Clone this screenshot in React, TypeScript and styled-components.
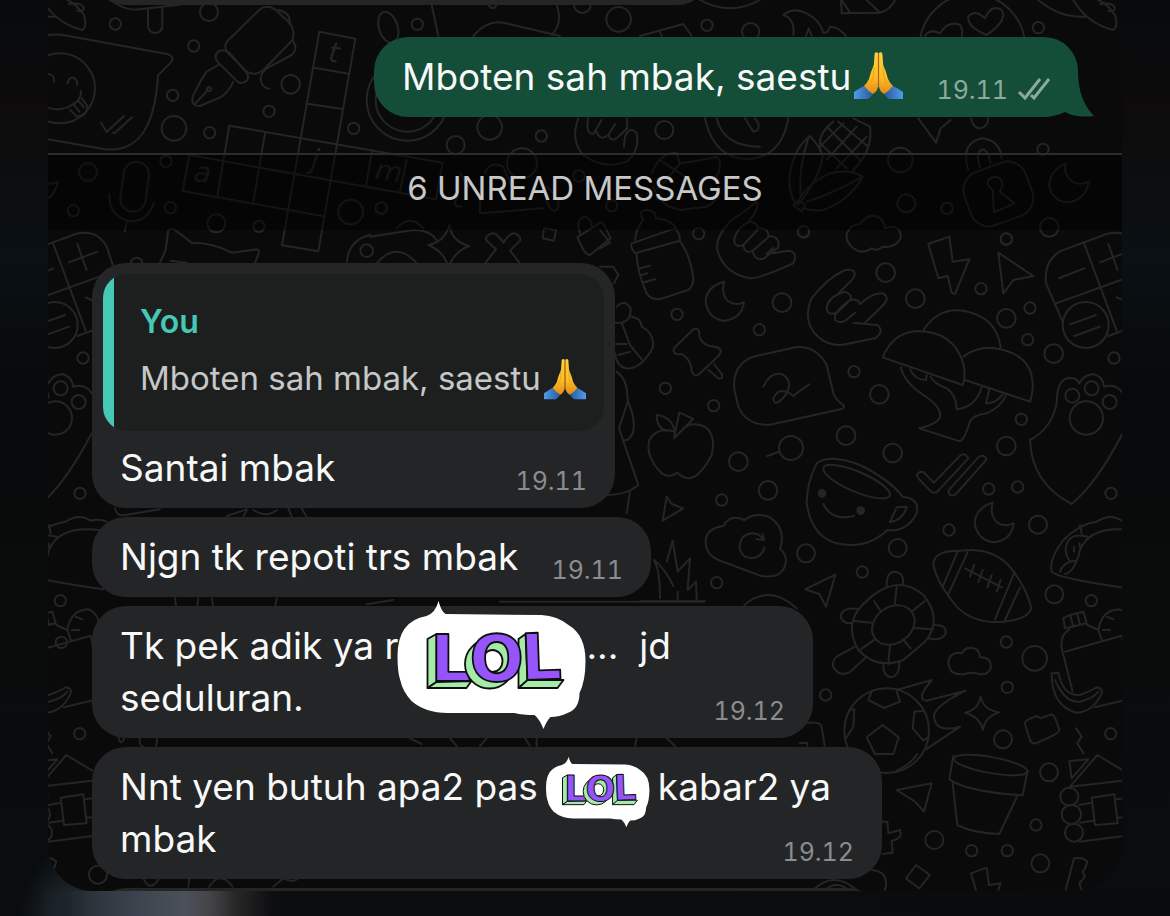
import React from "react";
import styled, { createGlobalStyle } from "styled-components";

const GlobalStyle = createGlobalStyle`
  * { box-sizing: border-box; }
  body {
    margin: 0;
    min-height: 100vh;
    background:
      linear-gradient(90deg, rgba(30, 38, 46, 0) 40px, #1b2228 64px, #2b333b 90px, #3b444e 135px, #4b505a 185px, #464548 208px, #262526 238px, #0c0d0f 275px, #090b0d 100%) left bottom / 100% 25px no-repeat,
      radial-gradient(ellipse 60px 70px at 80px 100%, #222a31 20%, rgba(34, 42, 49, 0) 100%),
      linear-gradient(180deg, #070a0d 0%, #0d0b0b 12%, #0a1014 28%, #07090b 45%, #0a0c0b 65%, #090d10 100%);
    font-family: Inter, "Liberation Sans", sans-serif;
  }
`;

const Page = styled.div`
  padding: 0 48px 25px;
`;

const Chat = styled.main`
  position: relative;
  isolation: isolate;
  overflow: hidden;
  border-radius: 0 0 45px 45px;
  background: #0a0a0a;
`;

const WallpaperSvg = styled.svg`
  position: absolute;
  inset: 0;
  z-index: -1;
  width: 100%;
  height: 100%;
  fill: none;
  stroke: #252525;
  stroke-width: 6;
  stroke-linecap: round;
  stroke-linejoin: round;

  text {
    fill: #252525;
    stroke: none;
    font-family: "DejaVu Sans", sans-serif;
    font-style: italic;
    font-weight: 200;
    font-size: 84px;
  }
`;

const Messages = styled.section`
  display: flex;
  flex-direction: column;
  align-items: flex-start;
  gap: 9px;
  padding: 0 44px;
`;

const Bubble = styled.article<{ $width: number; $sent?: boolean }>`
  position: relative;
  display: grid;
  width: ${(p) => p.$width}px;
  max-width: 100%;
  align-self: ${(p) => (p.$sent ? "flex-end" : "flex-start")};
  padding: 14px 28px;
  border-radius: 34px;
  background: ${(p) => (p.$sent ? "#144d38" : "#242527")};
  color: #f7f8f8;
`;

const QuoteBubble = styled(Bubble)`
  padding: 11px 11px 14px;
`;

const ClippedAbove = styled(Bubble)`
  height: 80px;
  margin-top: -75px;
`;

const ClippedBelow = styled(Bubble)`
  height: 80px;
  margin-bottom: -77px;
`;

const SentGroup = styled(Messages)`
  gap: 32px;
  padding-bottom: 36px;
`;

const ReceivedGroup = styled(Messages)`
  padding-top: 33px;
`;

const Body = styled.div`
  grid-area: 1 / 1;
  display: grid;
`;

const QuotedBody = styled(Body)`
  grid-area: auto;
  padding: 0 17px;
`;

const Text = styled.p`
  grid-area: 1 / 1;
  margin: 0;
  font-size: 37px;
  line-height: 52px;
  white-space: pre-wrap;
`;

const Meta = styled.footer`
  grid-area: 1 / 1;
  align-self: end;
  justify-self: end;
  display: flex;
  align-items: center;
  gap: 9px;
  margin-bottom: -4px;
`;

const Time = styled.time<{ $sent?: boolean }>`
  font-size: 25px;
  font-variant-numeric: tabular-nums;
  line-height: 34px;
  color: ${(p) => (p.$sent ? "#8aab9d" : "#8b8c8e")};
`;

const Quote = styled.blockquote`
  margin: 0 0 11px;
  padding: 20px 16px 25px 37px;
  border-radius: 24px;
  background: linear-gradient(90deg, #46c8b7 11px, #1d1f1e 11px);
`;

const QuoteAuthor = styled.cite`
  display: block;
  font-size: 32px;
  font-style: normal;
  font-weight: 600;
  line-height: 56px;
  color: #46c8b7;
`;

const QuoteText = styled.p`
  margin: 0;
  font-size: 33px;
  line-height: 56px;
  color: #c6c7c7;
  white-space: nowrap;
`;

const UnreadBar = styled.h2`
  margin: 0;
  border-top: 2px solid #2c2c2c;
  background: rgba(0, 0, 0, 0.45);
  color: #c8c8c8;
  font-size: 33px;
  font-weight: 400;
  line-height: 66px;
  padding-bottom: 9px;
  text-align: center;
`;

const Tail = styled.svg`
  position: absolute;
  right: -16px;
  bottom: 0;
  width: 66px;
  height: 50px;
  fill: #144d38;
`;

const EmojiSvg = styled.svg<{ $size: number }>`
  width: ${(p) => p.$size}px;
  height: ${(p) => p.$size}px;
  margin-left: 3px;
  vertical-align: -10px;
`;

const StickerSlot = styled.span<{ $width: number }>`
  position: relative;
  display: inline-block;
  width: ${(p) => p.$width}px;
  height: 36px;
`;

const StickerSvg = styled.svg<{ $width: number; $drop: number }>`
  position: absolute;
  top: ${(p) => p.$drop}px;
  left: 50%;
  width: ${(p) => p.$width}px;
  transform: translate(-50%, -50%);
  overflow: visible;
`;

function PrayingHands({ size }: { size: number }) {
  return (
    <EmojiSvg $size={size} viewBox="0 0 49 49" role="img" aria-label="Folded hands">
      <defs>
        <linearGradient id="hand" x1="0" y1="0" x2="0" y2="1">
          <stop offset="0" stopColor="#ffcf3f" />
          <stop offset="0.6" stopColor="#fdbd23" />
          <stop offset="1" stopColor="#e0891c" />
        </linearGradient>
        <linearGradient id="cuff" x1="0" y1="0" x2="1" y2="0">
          <stop offset="0" stopColor="#4f9be8" />
          <stop offset="1" stopColor="#27599c" />
        </linearGradient>
        <g id="half">
          <path d="M0 41 Q6 37 10 35 L19 43 Q17 46 14 48 L0 48 Z" fill="url(#cuff)" />
          <path
            d="M24.300 2 Q20.800 0 20.600 3 L19.800 14 Q17 20 15 28 Q13 32 10 35 Q14 40 19 43 Q24.300 40 24.300 33 Z"
            fill="url(#hand)"
          />
          <path d="M20 16 Q20.500 24 17 32" fill="none" stroke="#e39a1a" strokeWidth="0.800" />
        </g>
      </defs>
      <use href="#half" />
      <use href="#half" transform="translate(49 0) scale(-1 1)" />
      <path d="M24.500 2 V36" stroke="#a8651a" strokeWidth="1.200" />
    </EmojiSvg>
  );
}

function LolSticker({ width, drop }: { width: number; drop: number }) {
  return (
    <StickerSvg $width={width} $drop={drop} viewBox="0 0 189 128">
      <path
        fill="#fff"
        d="M29 15 Q38 12 41 0 Q44 11 48 13 L144 14 Q160 15 171 24 Q188 34 188 60 Q188 80 182 92 Q182 108 170 112 Q162 116 153 116 Q149 120 146 128 Q142 118 137 114 Q125 114 117 112 L50 112 Q28 112 14 100 Q5 90 3 80 Q0 72 0 55 Q0 20 29 15 Z"
      />
      <g stroke="#0e0e0e" strokeLinejoin="round" fontFamily="DejaVu Sans, sans-serif" fontWeight="700" fontSize="64">
        {/* green sides of the two outer blocks */}
        <g fill="#a3eba6" strokeWidth="1.800">
          <path d="M30 38 L39 33 L39 81 L30 87 Z" />
          <path d="M30 87 L39 81 L74 80 L69 87 Z" />
          <path d="M121 38 L128 33 L130 80 L121 87 Z" />
          <path d="M121 87 L130 79 L166 79 L160 87 Z" />
        </g>
        <g fill="#9655fb" strokeWidth="1.800">
          <text x="33" y="80">L</text>
          <text x="124" y="79" transform="rotate(-2 124 79)">L</text>
        </g>
        {/* ring: green back, white opening, purple front */}
        <circle cx="92" cy="63" r="24.500" fill="#a3eba6" strokeWidth="1.800" />
        <circle cx="99" cy="56" r="20" fill="#a3eba6" stroke="none" />
        <ellipse cx="95" cy="60" rx="10" ry="11" fill="#fff" strokeWidth="1.800" />
        <text x="72" y="80" fill="#9655fb" strokeWidth="1.800">O</text>
      </g>
    </StickerSvg>
  );
}

function Ticks() {
  return (
    <svg width="33" height="26" viewBox="0 0 33 26" fill="none" stroke="#8aab9d" strokeWidth="3" aria-label="Delivered" role="img">
      <path d="M2 15 L8 21 L23 2 M14 18 L17 21 L32 2" />
    </svg>
  );
}

type Patch = { x: number; y: number; paths: string[]; dots: number[][] };

const patches: Patch[] = [
  {
    x: 0,
    y: 0,
    paths: [
      // smiling speech bubble
      "M87,130 Q110,100 185,104 L505,163 Q525,170 512,188 L474,226 C470,300 455,350 440,380 C415,430 370,455 310,447 L110,412 Q50,390 37,355",
      "M203,250 Q205,232 220,233 Q232,236 232,254 M140,222 Q165,222 162,245 M125,315 Q180,345 230,305 Q245,290 243,272",
      "M210,330 L232,350 Q262,348 262,318 L245,295 M222,315 L238,335 M236,303 L252,322 M303,368 L320,396 L372,348 M338,398 L345,398 L396,352",
      "M444,24 L444,80 Q447,98 466,99 Q486,97 487,78 L487,24 M330,0 Q380,35 420,28 L540,14",
      // fountain pen
      "M680,125 L780,28 Q800,12 825,28 L870,70 Q885,90 878,120 L790,210 Q765,230 740,215 L685,160 Q670,145 680,125Z",
      "M835,30 Q875,40 868,72 M880,125 Q895,145 875,165 L800,205 Q775,225 785,250 Q792,265 808,266",
      "M655,155 Q640,165 652,185 L712,245 Q728,255 742,240 Q748,228 738,216 L690,160 Q670,145 655,155",
      "M655,195 L620,215 Q605,235 578,290 Q572,320 600,318 L665,290 Q690,270 700,245 M585,312 L622,272",
      // crossword
      "M958,95 L1066,116 L955,754 L846,736Z M942,203 L1046,221 M922,311 L1027,327 M688,377 L1328,488 L1308,598 L568,465 L548,573 L966,648",
      "M688,377 L652,588 M795,400 L760,604 M1116,456 L1098,556 M1220,480 L1200,572",
      // microphone
      "M328,583 Q325,645 385,663 Q440,670 462,608 M380,665 L374,695",
      // cat
      "M480,788 L497,750 L505,690 Q512,682 525,690 L575,728 Q640,728 695,758 L770,748 Q780,750 776,760 L765,788 M512,782 L560,788",
      "M1040,790 Q1045,720 1110,705",
      // strips between the messages
      "M345,1525 Q350,1550 375,1545 L480,1528 M680,1548 L740,1528 M730,1548 L740,1532 M760,1530 Q800,1555 830,1530 M865,1525 L875,1550 M905,1525 L920,1550",
      "M525,1795 L528,1818 M595,1795 L592,1818 M635,1795 L640,1818 M830,1795 L826,1818 M1100,1813 L1180,1800",
      "M355,2210 Q362,2245 375,2210 M420,2212 Q415,2238 430,2240 M470,2212 Q472,2230 468,2240 M1230,2215 L1265,2232 M1350,2215 L1370,2238 M1460,2215 L1440,2238",
      "M1575,2215 L1590,2238 M1610,2215 L1610,2238 M1910,2215 L1905,2238 M2000,2215 L2025,2238",
      "M430,2635 Q450,2680 478,2635 M568,2635 L565,2660 M628,2660 Q660,2610 698,2660 M820,2660 L850,2635 Q880,2650 895,2635",
      "M1500,1805 L2110,1805",
    ],
    dots: [[346,72,17],[627,36,27],[581,138,17],[518,286,17],[522,385,37],[629,398,17],[872,253,28],[807,334,17],[1061,385,17],[264,516,27],[498,484,17],[220,632,17],[511,623,17],[649,670,27],[777,679,17],[1052,636,37],[1143,624,17],[180,265,105],[1100,752,19],[410,790,17],[627,268,6],[294,2624,27],[184,1927,17]],
  },
  {
    x: 370,
    y: 0,
    paths: [
      "M238,675 Q245,725 298,738 Q250,755 235,805 Q225,755 175,735 Q225,725 238,675",
      "M365,700 Q380,697 400,728 Q420,697 435,700 Q455,710 450,722 L420,752 L450,790 M365,700 Q342,710 350,722 L378,748 L345,790",
      "M522,685 L558,690 L552,722 L518,715Z M622,712 L690,668 Q700,665 705,680 L722,715 L660,765 Q650,765 640,750Z M630,700 Q615,655 645,650 Q665,655 665,680",
      "M0,710 L130,690 Q180,690 200,720 M80,685 Q120,640 160,685 M20,790 Q80,720 140,790",
      "M185,15 L205,108 M355,14 Q370,35 380,14 M310,108 Q350,60 400,68 L570,108 M560,14 Q580,70 545,105 M810,108 L940,72 L965,108 M870,95 L875,108 M990,0 Q1080,50 1170,0",
      "M625,355 Q600,420 640,465 Q700,510 770,485 Q810,450 800,400 Q780,375 765,410 L762,440 M655,355 Q645,400 670,402 L695,360 M680,395 Q690,425 715,405 L735,372 M715,405 Q725,430 745,410 L772,385 L770,355",
      "M345,520 Q360,480 400,500 L425,560 M270,520 L295,560 M265,590 Q240,620 275,620 M330,580 L330,640 L520,625 M530,560 Q580,600 560,630 Q540,640 530,600",
      "M845,520 Q870,455 920,460 L930,490 L880,550 M930,490 Q1000,480 1040,470 Q1060,490 1040,530 M870,480 L960,540 M850,560 Q870,620 930,630 L1010,620 Q1050,600 1045,560",
      // clock
      "M1005,355 Q1030,475 1135,478 Q1235,470 1255,355 M1040,355 Q1060,440 1170,440 M1125,355 L1150,395 Q1170,395 1165,370 L1155,355",
    ],
    dots: [[637,14,25],[746,58,37],[1011,76,17],[1142,95,26],[142,73,17],[359,382,37],[514,408,17],[257,435,27],[883,390,27],[456,490,45],[627,528,17],[725,617,17],[34,624,17],[112,300,122],[112,300,95]],
  },
  {
    x: 770,
    y: 0,
    paths: [
      "M888,490 Q838,510 838,560 Q850,605 895,607 Q945,600 957,545 Q925,560 900,540 Q878,515 888,490",
      "M40,45 Q70,20 110,40 Q150,60 160,98 Q175,100 180,80 Q205,80 228,108 M40,45 Q75,55 70,105 M108,108 L116,85 L125,108",
      "M213,0 L215,40 L330,38 Q360,30 375,0 M215,0 L240,38 M290,0 L330,38",
      "M650,105 Q590,80 595,50 Q615,25 645,55 Q665,10 695,30 Q715,60 650,105 M465,108 Q480,85 510,100 Q535,60 570,75 Q580,90 575,108",
      "M805,0 Q870,55 950,50 M910,0 Q950,70 1030,90 Q1045,80 1035,45 Q1010,10 985,0 M990,12 Q1030,5 1035,25 Q1030,38 1015,32",
      // corn
      "M120,408 Q65,450 58,540 Q60,600 85,615 Q150,530 158,470 Q150,440 120,408 M115,415 Q85,500 92,590 M85,605 Q110,550 180,520 Q240,505 278,530 Q240,600 160,630 Q120,635 100,622 M70,615 L85,600 L105,615 L95,635Z M110,605 Q190,580 278,530",
      "M158,470 Q130,410 190,365 M300,380 Q310,450 250,510 M175,385 L270,480 M205,365 L295,440 M150,430 L230,505 M150,440 L220,370 M170,480 L260,380 M200,505 L290,410 M250,355 L300,380",
      "M445,355 L498,428 L512,385 L542,360 M603,355 Q610,385 630,385 Q655,380 655,355",
      // padlock
      "M595,510 Q570,430 635,415 Q690,420 695,475 M630,502 Q615,455 637,448 Q655,450 662,490 M668,570 Q640,550 665,532 Q695,525 698,555 L690,575 L733,610 L672,637Z",
      "M250,745 Q215,715 240,685 Q255,672 272,672 Q290,640 325,650 Q345,665 345,685 Q395,670 392,715 Q375,745 340,740 Q320,755 305,745 Q275,765 250,745",
    ],
    dots: [[607,140,158],[805,83,17],[391,480,37],[409,610,27],[531,625,17],[819,448,17],[838,682,28],[100,695,17],[709,717,17]],
  },
  {
    x: 600,
    y: 220,
    paths: [
      // baby bottle
      "M95,70 Q90,80 105,100 L240,62 Q240,40 225,25Z M110,102 Q110,150 140,220 Q155,242 185,236 L265,210 Q285,195 278,160 Q265,95 240,65 M120,145 L150,137 M125,165 L142,160 M132,187 L165,178 M105,60 Q110,20 130,0 Q110,-30 145,-30 Q170,-25 168,-5 Q215,0 228,25",
      // hands
      "M470,-55 Q440,-30 395,0 Q345,50 352,90 Q370,160 450,175 Q480,175 580,130 Q595,95 565,92 L518,100 M470,-55 Q480,-35 445,5",
      "M402,60 Q410,20 450,5 Q480,10 472,30 L430,75 Q405,85 402,60 M430,75 Q435,105 458,92 L505,52 Q508,22 472,25 M458,92 Q465,125 492,115 L535,82 Q542,50 505,47 M500,102 L520,84",
      "M735,150 Q680,175 635,235 Q610,290 640,335 Q680,385 740,372 L825,355 Q855,335 832,315 L760,308 M735,150 Q775,145 760,175 L715,220 M780,252 Q820,215 850,220 Q870,235 850,255 L795,308",
      "M680,270 Q680,230 735,215 Q760,225 750,240 L715,275 Q690,290 680,270 M705,300 Q700,275 750,240 Q775,235 780,252 M705,300 Q725,315 745,295 L765,278",
      "M373,185 Q318,200 317,245 Q325,300 375,302 Q425,295 432,247 Q405,260 380,240 Q362,215 373,185",
      "M222,385 L280,328 Q300,320 298,350 Q310,380 345,380 Q370,385 358,405 L300,460 Q285,475 275,455 Q275,420 245,402 Q215,405 222,385Z M325,450 L355,475 Q370,478 366,463 L342,432",
      "M460,410 L590,381 Q650,378 680,435 L700,520 Q708,540 730,555 Q735,565 722,568 L510,614 Q440,618 415,560 L403,510 Q395,435 460,410Z M490,500 Q510,455 545,462 Q580,480 560,520 Q540,550 525,548 Q512,535 535,515 Q560,510 580,528 Q600,510 628,493",
      // apple
      "M225,635 Q170,620 148,660 Q135,710 185,760 Q210,775 232,758 Q250,775 270,775 Q300,770 335,705 Q350,640 310,618 Q275,605 250,625 M222,655 L238,577 L280,597Z M225,635 Q215,590 170,585 Q170,625 200,632",
      "M538,695 L502,708 M200,830 L215,852 L250,865 L188,902Z",
      "M50,455 Q85,480 82,540 Q110,600 98,640 Q85,665 75,660 M85,540 L57,625 L115,795 Q80,825 20,825 M90,815 L80,880",
      "M50,260 Q75,235 92,265 Q95,300 65,308 L45,308 M65,308 L90,375 L125,418 M95,290 Q125,295 125,320 Q165,340 158,385 Q120,450 80,445 Q50,440 45,400 M48,372 L80,372 M55,405 L90,395 M0,140 L40,140 L55,165 L42,190 M0,30 L30,68 L0,85",
    ],
    dots: [[296,41,17],[611,36,17],[546,248,28],[231,283,17],[478,329,17],[196,505,17],[341,557,17],[762,455,17],[838,523,28],[738,647,28],[415,725,28],[504,811,28],[365,840,17],[857,158,28],[573,684,36]],
  },
  {
    x: 880,
    y: 220,
    paths: [
      "M145,72 L208,50 L218,125 L268,118 L225,222 L215,218 L203,168 L175,175Z M355,98 L460,168 L400,180 L370,220Z",
      // calculator
      "M548,305 L498,190 Q490,120 545,92 L680,42 Q743,25 773,80 L800,160 M685,348 L740,328 M613,72 L710,332 M528,250 L793,155 M538,174 L613,145 M660,127 L745,95 M685,72 L713,150 M710,232 L728,240 M570,313 L648,285 M583,348 L660,320",
      // tree
      "M132,328 Q175,262 250,272 Q350,290 362,382 M8,412 Q40,335 115,333 Q220,335 250,430 Q258,470 248,495Z M250,410 Q290,380 340,384 Q460,400 458,500 Q456,530 450,545 L255,480",
      "M62,442 Q75,490 130,525 Q185,560 180,590 Q175,610 118,625 L240,664 Q255,655 270,605 Q280,585 320,580 Q365,560 378,525 M152,470 Q160,490 200,505 Q230,525 230,568 Q290,560 305,500 M90,448 Q105,480 138,480 L140,465 M328,507 L318,550 Q350,550 368,522",
      "M110,765 Q120,750 132,758 L162,788 L240,707 Q255,695 265,715 L175,812 Q165,825 150,812 L115,775Z M205,812 L295,712 Q310,700 320,718 L228,822 Q210,835 205,812Z",
      // paw
      "M450,660 Q515,625 530,550 Q530,485 560,475 Q590,470 598,490 Q610,465 640,462 Q670,470 672,500 Q710,490 728,520 M450,660 Q455,790 575,852 Q650,790 728,640",
    ],
    dots: [[379,57,17],[303,206,17],[106,236,28],[379,295,28],[450,264,17],[443,359,17],[521,401,28],[702,414,17],[424,598,17],[379,678,28],[38,699,28],[326,807,17],[413,801,17],[693,820,17],[617,315,69],[577,527,21],[635,505,21],[689,546,21],[619,594,50]],
  },
  {
    x: 640,
    y: 480,
    paths: [
      "M250,138 Q195,145 197,190 Q200,225 235,240 L360,287 Q430,300 438,245 Q438,220 420,207 Q440,145 390,112 Q345,95 313,120 Q270,100 250,138Z M372,180 Q345,145 310,170 Q285,205 315,230 Q360,245 374,203 M350,178 L372,180 L368,162",
      "M42,240 Q75,265 100,318 M60,355 Q60,270 42,240 M80,245 L98,182 L113,275 L150,235 L143,330 L168,305 L170,358 M113,335 L113,358 M0,364 L195,364 M313,375 Q390,310 470,385",
    ],
    dots: [[230,308,17]],
  },
  {
    x: 800,
    y: 500,
    paths: [
      // cup
      "M50,-110 Q20,-50 20,10 Q35,110 110,130 Q200,150 262,90 Q320,98 350,40 Q360,-5 308,-10 Q270,-60 180,-105 Q90,-140 50,-110Z M70,12 Q95,65 162,48 M290,22 L320,20 Q310,60 270,66Z",
      "M578,8 Q525,25 524,72 Q535,122 582,127 Q635,120 641,70 Q605,85 585,60 Q570,40 578,8",
      // football
      "M400,190 Q405,150 480,152 Q570,140 625,195 Q680,260 694,325 Q685,360 600,366 Q520,370 470,320 Q405,240 400,190Z M472,157 L428,260 M505,152 L443,287 M642,220 L585,358 M660,262 L615,360 M495,205 L605,262 M522,195 L510,230 M548,210 L535,247 M575,225 L562,262 M602,240 L590,275",
      "M15,268 L106,224 L78,320 L58,282Z",
      // turtle
      "M220,285 Q300,225 370,285 Q430,360 375,425 L310,480 Q230,510 175,450 Q130,370 190,312Z M290,262 L284,312 M375,303 L337,333 M340,384 L400,388 M308,417 L332,445 M270,435 L265,492 M182,448 L225,418 M158,362 L213,368 M222,303 L243,335",
      "M260,262 Q258,215 285,215 Q315,220 308,255 M175,327 Q125,320 122,350 Q130,375 158,368 M405,375 Q440,375 437,400 Q425,425 385,415 M165,440 L110,470 Q85,495 115,518 Q140,530 165,502 L195,475 M250,495 Q250,530 275,532 Q300,525 298,488",
      "M455,515 Q435,485 455,465 Q470,455 485,460 Q500,435 530,448 Q540,460 540,472 Q575,470 572,505 Q560,530 530,520 Q510,515 495,522 Q470,525 455,515Z",
      // flaming ball
      "M248,675 L296,712 L280,762 L225,762 L200,712Z M215,575 L205,600 L252,624 L300,605 L290,575 M148,630 L163,628 L160,680 L138,715 M370,632 L343,635 L338,685 L370,722 L384,712 M290,812 Q330,795 352,762 M290,570 L395,540 Q345,600 380,602 L497,572 Q400,620 402,650 Q405,700 480,680 L378,748",
      "M542,590 Q550,630 597,637 Q555,650 548,690 Q540,650 495,638 Q535,630 542,590 M675,672 Q672,660 712,648 L720,655 L755,643 Q765,645 778,690 Q780,700 708,730 Q695,732 690,720Z",
      // flower pot
      "M460,767 L448,838 Q500,875 668,886 L683,812 M458,850 L472,975 Q520,1000 598,1002 L652,888",
      "M290,870 L395,850 L372,935 L345,905Z M247,965 L262,965 L265,1000 L300,990 Q310,1015 275,1022 L278,1058 L248,1062 M348,1095 L390,1125 L358,1165 L318,1135Z M528,1170 L513,1120 L560,1103 L567,1155 L602,1150 L595,1170",
      "M797,1170 L822,1075 Q850,1070 862,1085 L855,1105 L848,1115 L855,1130 L838,1150 L845,1170 M40,1170 Q100,1110 170,1170 M75,1170 Q110,1140 145,1170 M215,1110 Q270,1115 255,1170 M0,672 Q60,660 65,680 L74,738 M0,730 L22,728 L22,738",
      // taco
      "M1013,65 Q990,55 965,62 Q930,38 890,65 Q840,70 790,120 Q745,180 755,215 Q770,235 1003,268 M993,90 Q870,75 840,150 Q825,215 795,222 M862,110 Q800,95 797,150 Q800,180 815,185 M780,215 Q790,185 825,182 M840,75 L845,100 M822,140 L822,155 M838,130 L840,142",
      // groceries
      "M790,355 Q800,345 850,335 L860,370 L795,385Z M812,350 L820,380 M832,343 L840,375 M808,388 Q780,405 785,445 L818,575 M862,375 L895,390 L905,418 M795,455 L965,407 L972,440 M895,390 Q905,330 958,328 Q993,340 993,400 M920,350 L940,358 M908,390 L930,390 M885,622 L975,600",
      "M755,520 L775,518 Q790,590 840,585 Q880,570 890,562 Q910,565 905,580 Q880,635 830,638 Q755,620 755,520 M765,540 Q795,610 840,605 Q880,595 895,575",
      // log cabin
      "M828,685 L845,710 L832,730 L850,760 M808,783 L865,778 L815,835Z M810,860 L892,765 L970,812 M810,860 L970,842 M838,915 L875,908 M875,893 L943,883 L953,970 L885,975Z M840,968 L880,962 M838,1025 L970,1008 M950,898 L970,895 M955,953 L970,952",
    ],
    dots: [[447,90,17],[714,74,27],[293,144,27],[187,216,17],[763,283,27],[874,302,17],[619,426,17],[704,475,37],[622,562,17],[77,585,17],[609,718,27],[932,701,17],[747,817,27],[708,975,17],[403,1020,27],[515,1052,17],[622,1052,17],[721,1090,27],[18,160,27],[260,692,127],[808,890,27],[814,943,29],[822,998,27]],
  },
];

function Wallpaper() {
  return (
    <WallpaperSvg viewBox="48 0 1074 891" preserveAspectRatio="xMidYMin slice" aria-hidden="true">
      <defs>
        <g id="doodles">
          {patches.map((p) => (
            <g key={`${p.x}-${p.y}`} transform={`translate(${p.x} ${p.y}) scale(0.33333)`}>
              {p.paths.map((d) => (
                <path key={d} d={d} />
              ))}
              {p.dots.map(([cx, cy, r]) => (
                <circle key={`${cx},${cy},${r}`} cx={cx} cy={cy} r={r} />
              ))}
            </g>
          ))}
          <g transform="scale(0.33333)">
            <rect x="366" y="485" width="76" height="150" rx="38" transform="rotate(8 404 560)" />
            <ellipse cx="1165" cy="82" rx="28" ry="48" transform="rotate(-18 1165 82)" />
            <rect x="2897" y="497" width="196" height="170" rx="58" transform="rotate(-20 2995 582)" />
            <ellipse cx="2570" cy="1445" rx="108" ry="30" transform="rotate(23 2570 1445)" />
            <ellipse cx="2680" cy="1875" rx="68" ry="54" transform="rotate(-35 2680 1875)" />
            <ellipse cx="2972" cy="2295" rx="112" ry="24" transform="rotate(10 2972 2295)" />
            <circle cx="2466" cy="1480" r="10" fill="#252525" />
            <circle cx="2582" cy="1532" r="10" fill="#252525" />
            <text x="982" y="184" transform="rotate(8 982 184)">t</text>
            <text x="930" y="505" transform="rotate(8 930 505)">j</text>
            <text x="578" y="542" transform="rotate(8 578 542)">a</text>
            <text x="1122" y="536" transform="rotate(8 1122 536)">m</text>
          </g>
        </g>
      </defs>
      <use href="#doodles" x="-1031" />
      <use href="#doodles" />
    </WallpaperSvg>
  );
}

export default function App() {
  return (
    <Page>
      <GlobalStyle />
      <Chat>
        <Wallpaper />
        <SentGroup>
          <ClippedAbove $width={619} />
          <Bubble $width={704} $sent>
            <Tail viewBox="0 0 66 50" aria-hidden="true">
              <path d="M50 0 Q49 32 66 49 Q47 51 37 45 Q28 50 10 50 Z" />
            </Tail>
            <Body>
              <Text>
                Mboten sah mbak, saestu
                <PrayingHands size={49} />
              </Text>
              <Meta>
                <Time $sent>19.11</Time>
                <Ticks />
              </Meta>
            </Body>
          </Bubble>
        </SentGroup>
        <UnreadBar>6 UNREAD MESSAGES</UnreadBar>
        <ReceivedGroup>
          <QuoteBubble $width={523}>
            <Quote>
              <QuoteAuthor>You</QuoteAuthor>
              <QuoteText>
                Mboten sah mbak, saestu
                <PrayingHands size={42} />
              </QuoteText>
            </Quote>
            <QuotedBody>
              <Text>Santai mbak</Text>
              <Meta>
                <Time>19.11</Time>
              </Meta>
            </QuotedBody>
          </QuoteBubble>
          <Bubble $width={559}>
            <Body>
              <Text>Njgn tk repoti trs mbak</Text>
              <Meta>
                <Time>19.11</Time>
              </Meta>
            </Body>
          </Bubble>
          <Bubble $width={721}>
            <Body>
              <Text>
                Tk pek adik ya r
                <StickerSlot $width={188}>
                  <LolSticker width={189} drop={42} />
                </StickerSlot>
                {"...  jd\nseduluran."}
              </Text>
              <Meta>
                <Time>19.12</Time>
              </Meta>
            </Body>
          </Bubble>
          <Bubble $width={790}>
            <Body>
              <Text>
                Nnt yen butuh apa2 pas
                <StickerSlot $width={120}>
                  <LolSticker width={104} drop={28} />
                </StickerSlot>
                {"kabar2 ya\nmbak"}
              </Text>
              <Meta>
                <Time>19.12</Time>
              </Meta>
            </Body>
          </Bubble>
          <ClippedBelow $width={790} />
        </ReceivedGroup>
      </Chat>
    </Page>
  );
}
